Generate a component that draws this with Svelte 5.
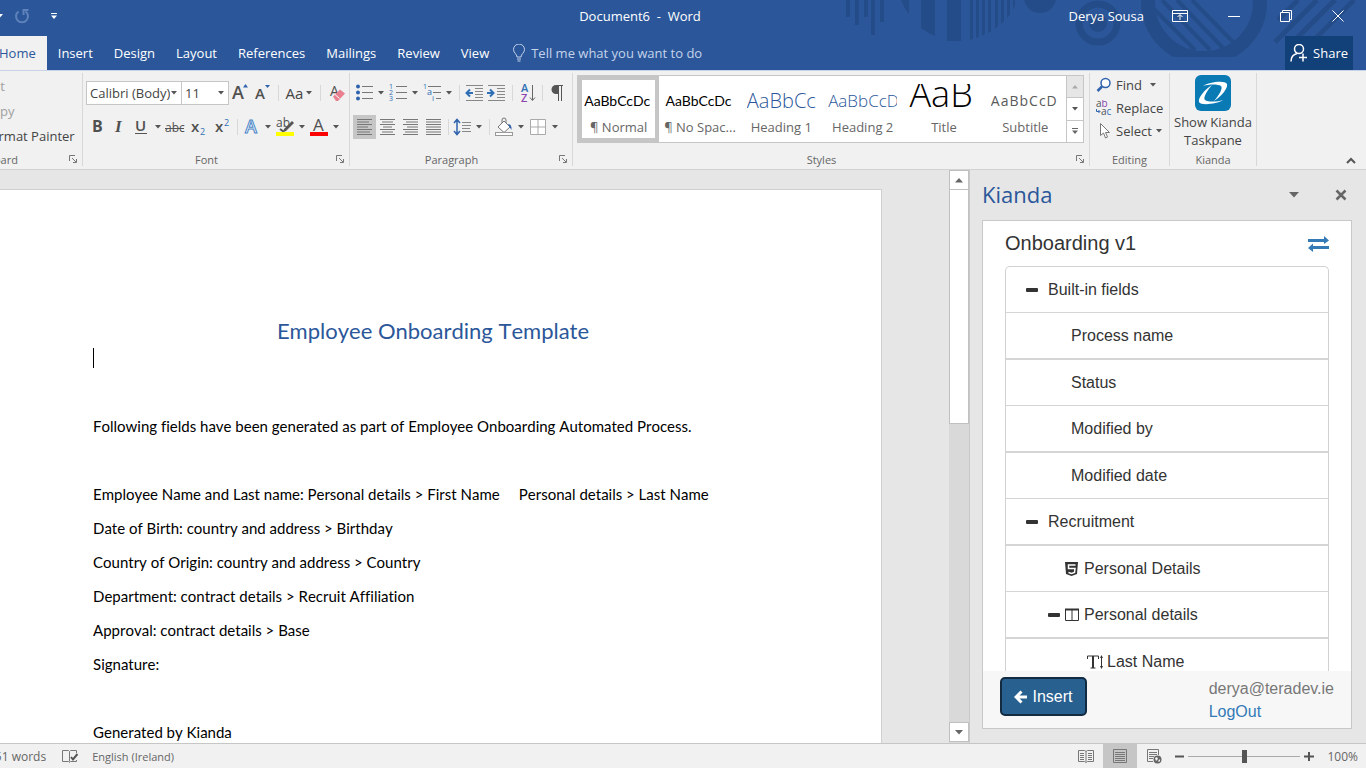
<script lang="ts">
  type Tool = { kind: string; label?: string; cls?: string; on?: boolean };

  const tabs = ['Insert', 'Design', 'Layout', 'References', 'Mailings', 'Review', 'View'];

  const sep = (cls = '') => ({ kind: 'sep', cls });
  const caret = (label: string) => ({ kind: 'caret', label: label + ' options', cls: 'narrow' });

  const fontTop: Tool[] = [
    { kind: 'grow', label: 'Increase font size' },
    { kind: 'shrink', label: 'Decrease font size' },
    sep('s10'),
    { kind: 'case', label: 'Change case', cls: 'wide' },
    sep('s10'),
    { kind: 'clear', label: 'Clear formatting', cls: 'mid' },
  ];
  const fontBottom: Tool[] = [
    { kind: 'bold', label: 'Bold' },
    { kind: 'italic', label: 'Italic' },
    { kind: 'underline', label: 'Underline' },
    caret('Underline'),
    { kind: 'strike', label: 'Strikethrough' },
    { kind: 'sub', label: 'Subscript', cls: 'mid' },
    { kind: 'sup', label: 'Superscript', cls: 'mid' },
    sep(),
    { kind: 'effects', label: 'Text effects' },
    caret('Text effects'),
    { kind: 'highlight', label: 'Highlight' },
    caret('Highlight'),
    { kind: 'color', label: 'Font color' },
    caret('Font color'),
  ];
  const paraTop: Tool[] = [
    { kind: 'bullets', label: 'Bullets' },
    caret('Bullets'),
    { kind: 'numbers', label: 'Numbering' },
    caret('Numbering'),
    { kind: 'multi', label: 'Multilevel list' },
    caret('Multilevel list'),
    sep('s8'),
    { kind: 'outdent', label: 'Decrease indent' },
    { kind: 'indent', label: 'Increase indent' },
    sep('s10'),
    { kind: 'sort', label: 'Sort' },
    sep(),
    { kind: 'pilcrow', label: 'Show marks', cls: 'mid' },
  ];
  const paraBottom: Tool[] = [
    { kind: 'left', label: 'Align left', cls: 'align', on: true },
    { kind: 'center', label: 'Center', cls: 'align' },
    { kind: 'right', label: 'Align right', cls: 'align' },
    { kind: 'justify', label: 'Justify', cls: 'align' },
    sep(),
    { kind: 'spacing', label: 'Line spacing' },
    caret('Line spacing'),
    sep('s8'),
    { kind: 'bucket', label: 'Shading' },
    caret('Shading'),
    { kind: 'borders', label: 'Borders' },
    caret('Borders'),
  ];

  const alignLines: Record<string, [number, number][]> = {
    left: [[3, 18], [3, 15], [3, 18], [3, 14], [3, 18], [3, 16], [3, 18]],
    center: [[3, 18], [5, 16], [3, 18], [6, 15], [3, 18], [5, 16], [3, 18]],
    right: [[3, 18], [6, 18], [3, 18], [7, 18], [3, 18], [5, 18], [3, 18]],
    justify: [[3, 18], [3, 18], [3, 18], [3, 18], [3, 18], [3, 18], [3, 18]],
  };

  const styles = [
    { sample: 'AaBbCcDc', name: '¶ Normal', cls: 'body' },
    { sample: 'AaBbCcDc', name: '¶ No Spac...', cls: 'body' },
    { sample: 'AaBbCc', name: 'Heading 1', cls: 'h1' },
    { sample: 'AaBbCcD', name: 'Heading 2', cls: 'h2' },
    { sample: 'AaB', name: 'Title', cls: 'title' },
    { sample: 'AaBbCcD', name: 'Subtitle', cls: 'subtitle' },
  ];

  const paragraphs = [
    'Following fields have been generated as part of Employee Onboarding Automated Process.',
    '',
    'Employee Name and Last name: Personal details > First Name\u00a0\u00a0\u00a0\u00a0 Personal details > Last Name',
    'Date of Birth: country and address > Birthday',
    'Country of Origin: country and address > Country',
    'Department: contract details > Recruit Affiliation',
    'Approval: contract details > Base',
    'Signature:',
    '',
    'Generated by Kianda',
  ];

  const fields = [
    { text: 'Built-in fields', level: 'top', minus: true },
    { text: 'Process name', level: 'child' },
    { text: 'Status', level: 'child' },
    { text: 'Modified by', level: 'child' },
    { text: 'Modified date', level: 'child' },
    { text: 'Recruitment', level: 'top', minus: true },
    { text: 'Personal Details', level: 'form', icon: 'html5' },
    { text: 'Personal details', level: 'panel', icon: 'columns', minus: true },
    { text: 'Last Name', level: 'field', icon: 'text' },
  ];

  let selectedStyle = $state(0);
  let zoom = $state(100);
</script>

{#snippet down()}
  <svg width="6" height="4" viewBox="0 0 6 4" aria-hidden="true"><path d="M0 0h6L3 3.5z" fill="#555" /></svg>
{/snippet}

{#snippet glyph(kind: string)}
  <svg width="22" height="24" viewBox="0 0 22 24" aria-hidden="true">
    {#if kind === 'grow'}
      <text x="3" y="18" font-size="18" class="g semi">A</text><path d="M14 6.500h5L16.500 3z" fill="#2f62ad" />
    {:else if kind === 'shrink'}
      <text x="4" y="18" font-size="15" class="g semi">A</text><path d="M14 4h5L16.500 7z" fill="#2f62ad" />
    {:else if kind === 'clear'}
      <text x="4" y="15" font-size="14" class="g">A</text>
      <path d="M7 15.500l7-7 5 4-7 7.500h-2z" fill="#e8808f" /><path d="M9 13.500l4.500 4" stroke="#fff" />
    {:else if kind === 'bold'}
      <text x="6" y="17" font-size="16" class="g heavy">B</text>
    {:else if kind === 'italic'}
      <text x="7" y="17" font-size="17" class="g serif">I</text>
    {:else if kind === 'underline'}
      <text x="5" y="16" font-size="15" class="g semi">U</text><path d="M5 18.500h12" stroke="#555" />
    {:else if kind === 'strike'}
      <text x="1" y="17" font-size="12" class="g">abc</text><path d="M1 13.500h19" stroke="#555" />
    {:else if kind === 'sub'}
      <text x="4" y="17" font-size="15" class="g semi">x</text><text x="13" y="20" font-size="9" class="b">2</text>
    {:else if kind === 'sup'}
      <text x="4" y="17" font-size="15" class="g semi">x</text><text x="13" y="11" font-size="9" class="b">2</text>
    {:else if kind === 'effects'}
      <text x="5" y="18" font-size="18" class="outline">A</text>
    {:else if kind === 'highlight'}
      <text x="2" y="12" font-size="12" class="g">ab</text>
      <path d="M18 6l2 2-8 8-3 1 1-3z" fill="#555" /><path d="M6 14l4 3" stroke="#555" stroke-width="2" />
      <rect x="2" y="17" width="18" height="4" fill="#ff0" />
    {:else if kind === 'color'}
      <text x="5" y="16" font-size="17" class="g">A</text><rect x="2" y="17" width="18" height="4" fill="#f00" />
    {:else if kind === 'bullets'}
      {#each [5, 11, 17] as y}
        <circle cx="5" cy={y + 0.5} r="2" fill="#2f62ad" /><path d="M9 {y + 0.5}h11" stroke="#777" />
      {/each}
    {:else if kind === 'numbers'}
      {#each [5, 11, 17] as y, i}
        <text x="2" y={y + 3} font-size="7" class="b">{i + 1}</text><path d="M9 {y + 0.5}h11" stroke="#777" />
      {/each}
    {:else if kind === 'multi'}
      <text x="2" y="8" font-size="7" class="b">1</text><text x="6" y="14" font-size="9" class="b">a</text><text x="11" y="20" font-size="8" class="b">i</text>
      <path d="M7 5.500h13M12 11.500h8M15 17.500h5" stroke="#777" />
    {:else if kind === 'outdent' || kind === 'indent'}
      <path d="M3 4.500h17M12 7.500h8M12 10.500h8M12 13.500h8M12 16.500h8M3 19.500h17" stroke="#888" />
      {#if kind === 'outdent'}
        <path d="M10 12H4M7 8.500L3.500 12 7 15.500" stroke="#2f6fb5" stroke-width="2" fill="none" />
      {:else}
        <path d="M2 12h6M5 8.500L8.500 12 5 15.500" stroke="#2f6fb5" stroke-width="2" fill="none" />
      {/if}
    {:else if kind === 'sort'}
      <text x="4" y="11" font-size="11" class="b semi">A</text><text x="4" y="21" font-size="11" class="p semi">Z</text>
      <path d="M15.500 4v15M13 16.500l2.500 3 2.500-3" stroke="#666" fill="none" />
    {:else if kind === 'pilcrow'}
      <path d="M17 4.500H10M12.500 4v16M15.500 4v16" stroke="#555" fill="none" /><path d="M12 4h-2a4.500 4.500 0 0 0 0 9h2z" fill="#555" />
    {:else if kind in alignLines}
      {#each alignLines[kind] as [a, b], i}
        <path d="M{a} {4.5 + i * 2.5}H{b}" stroke="#777" />
      {/each}
    {:else if kind === 'spacing'}
      <path d="M6 5v14M3 8l3-3.500L9 8M3 16l3 3.500L9 16" stroke="#2f62ad" stroke-width="1.500" fill="none" />
      <path d="M11 7.500h9M11 10.500h9M11 13.500h8M11 16.500h9" stroke="#888" />
    {:else if kind === 'bucket'}
      <path d="M5 12l6-6 6 6-6 5.500z" fill="#fff" stroke="#777" /><path d="M9 8V5a2 2 0 0 1 4 0v3" stroke="#777" fill="none" />
      <path d="M15 9q4 0 3.500 6l-2-3z" fill="#2f62ad" /><rect x="2.500" y="17.500" width="17" height="3" fill="#fff" stroke="#999" />
    {:else if kind === 'borders'}
      <path d="M3.500 4.500h15v15h-15z" fill="#fff" stroke="#aaa" /><path d="M11 5v14M4 12h14" stroke="#aaa" />
    {/if}
  </svg>
{/snippet}

{#snippet toolRow(items: Tool[])}
  {#each items as item}
    {#if item.kind === 'sep'}
      <span class="sep {item.cls}"></span>
    {:else}
      <button class="tool {item.cls ?? ''}" class:on={item.on} aria-label={item.label}>
        {#if item.kind === 'caret'}
          {@render down()}
        {:else if item.kind === 'case'}
          <span class="case">Aa</span>{@render down()}
        {:else}
          {@render glyph(item.kind)}
        {/if}
      </button>
    {/if}
  {/each}
{/snippet}

{#snippet launcher(label: string)}
  <button class="launcher" aria-label={label}>
    <svg width="9" height="9" viewBox="0 0 9 9" aria-hidden="true">
      <path d="M.5 6V.5H6M3 3l4 4M4 7.500h3.500V4" stroke="#777" fill="none" />
    </svg>
  </button>
{/snippet}

<div class="app">
  <header>
    <svg class="decor" width="526" height="57" viewBox="0 0 526 57" aria-hidden="true">
      <g fill="#244c88">
        <path d="M6 0h4v17H6zM15 0h4v25h-4zM24 0h4v17h-4zM31 0h4v35h-4zM40 0h4v22h-4z" />
        <path d="M61 0h8v14Q64 8 61 0zM81 0h14v36q-8-3-14-8zM107 0h14v41h-14z" />
        <path d="M130 0h3v39l-3 1zM136 0h3v37l-3 1zM142 0h3v34l-3 2zM148 0h3v31l-3 2zM155 0h3v26l-3 3zM161 0h3v21l-3 3zM167 0h3v15l-3 3zM173 0h2v6l-2 4z" />
        <path d="M184 0h32q-4 13-16 13T184 0z" />
        <circle cx="258" cy="23" r="9" />
      </g>
      <g fill="none" stroke="#244c88">
        <circle cx="258" cy="23" r="19" stroke-width="7" />
        <circle cx="364" cy="2" r="56" stroke-width="14" />
        <path d="M311 6l44 44M322 0l48 50M337 0l46 48M352 0l43 44" stroke-width="4" />
        <path d="M458 0l-20 20M477 0l-42 42M495 0l-42 42M514 0l-42 42" stroke-width="5" />
      </g>
    </svg>
    <div class="titlebar">
      <div class="quick">
        <button class="bare" aria-label="Undo options"><svg width="6" height="4" viewBox="0 0 6 4"><path d="M0 0h6L3 3.500z" fill="#fff" /></svg></button>
        <button class="bare" aria-label="Repeat">
          <svg width="16" height="16" viewBox="0 0 16 16"><path d="M4.500 3.500a6 6 0 1 0 7 0M14.500 2H9.500v5" stroke="#5f82bb" stroke-width="2" fill="none" /></svg>
        </button>
        <button class="bare customize" aria-label="Customize toolbar"><svg width="6" height="6" viewBox="0 0 6 6"><path d="M0 .5h6" stroke="#fff" /><path d="M0 2.500h6L3 6z" fill="#fff" /></svg></button>
      </div>
      <h1>Document6&nbsp; -&nbsp; Word</h1>
      <div class="window">
        <span class="user">Derya Sousa</span>
        <button class="bare" aria-label="Ribbon display"><svg width="16" height="12" viewBox="0 0 16 12"><path d="M.5.500h15v11H.5zM1 3.500h14M8 10V5M5.500 7L8 4.500 10.500 7" /></svg></button>
        <button class="bare" aria-label="Minimize"><svg width="12" height="12" viewBox="0 0 12 12"><path d="M0 6.500h12" /></svg></button>
        <button class="bare" aria-label="Restore"><svg width="12" height="12" viewBox="0 0 12 12"><path d="M.5 2.500h9v9h-9zM2.500 2V.5h9v9H10" /></svg></button>
        <button class="bare" aria-label="Close"><svg width="12" height="12" viewBox="0 0 12 12"><path d="M.5.500l11 11M11.500.500l-11 11" /></svg></button>
      </div>
    </div>
    <nav aria-label="Ribbon tabs">
      <button class="tab active">Home</button>
      {#each tabs as tab}
        <button class="tab">{tab}</button>
      {/each}
      <button class="tell">
        <svg width="12" height="18" viewBox="0 0 12 18" aria-hidden="true"><path d="M4 13c0-3-3.500-4-3.500-7.500a5.500 5.500 0 0 1 11 0C11.500 9 8 10 8 13zM4 15h4M4.500 17h3" stroke="#c5d3ea" fill="none" /></svg>
        Tell me what you want to do
      </button>
      <button class="share">
        <svg width="18" height="18" viewBox="0 0 18 18" aria-hidden="true"><circle cx="9" cy="5" r="4.500" /><path d="M1 17.500c0-4 2.500-7 6-8M13 9.500v8M9 13.500h8" /></svg>
        Share
      </button>
    </nav>
  </header>

  <section class="ribbon" aria-label="Home">
    <div class="group clipboard">
      <div class="content">
        <button class="dim">Cut</button>
        <button class="dim">Copy</button>
        <button>Format Painter</button>
      </div>
      <div class="caption"><span>Clipboard</span>{@render launcher('Clipboard settings')}</div>
    </div>

    <div class="group font">
      <div class="content">
        <div class="row">
          <label class="combo name"><select aria-label="Font"><option>Calibri (Body)</option></select>{@render down()}</label>
          <label class="combo size"><select aria-label="Font size"><option>11</option></select>{@render down()}</label>
          {@render toolRow(fontTop)}
        </div>
        <div class="row">{@render toolRow(fontBottom)}</div>
      </div>
      <div class="caption"><span>Font</span>{@render launcher('Font settings')}</div>
    </div>

    <div class="group paragraph">
      <div class="content">
        <div class="row">{@render toolRow(paraTop)}</div>
        <div class="row">{@render toolRow(paraBottom)}</div>
      </div>
      <div class="caption"><span>Paragraph</span>{@render launcher('Paragraph settings')}</div>
    </div>

    <div class="group styles">
      <div class="gallery">
        {#each styles as style, i}
          <button class="style" class:selected={i === selectedStyle} onclick={() => (selectedStyle = i)}>
            <span class="sample {style.cls}">{style.sample}</span>
            <span class="style-name">{style.name}</span>
          </button>
        {/each}
        <div class="scroller">
          <button disabled aria-label="Previous styles"><svg width="6" height="4" viewBox="0 0 6 4"><path d="M0 3.500h6L3 0z" fill="#aaa" /></svg></button>
          <button aria-label="Next styles">{@render down()}</button>
          <button aria-label="More styles"><svg width="6" height="6" viewBox="0 0 6 6"><path d="M0 .5h6" stroke="#666" /><path d="M0 2.500h6L3 6z" fill="#666" /></svg></button>
        </div>
      </div>
      <div class="caption"><span>Styles</span>{@render launcher('Style settings')}</div>
    </div>

    <div class="group editing">
      <div class="content">
        <button>
          <svg width="16" height="16" viewBox="0 0 16 16" aria-hidden="true"><circle cx="9.500" cy="6" r="4.500" stroke="#2f62ad" stroke-width="1.500" fill="#fff" /><path d="M6 9.500L1.500 14" stroke="#2f62ad" stroke-width="2.500" /></svg>
          Find <span class="gap"></span>{@render down()}
        </button>
        <button>
          <svg width="16" height="16" viewBox="0 0 16 16" aria-hidden="true"><text x="0" y="7" font-size="10" class="g">a<tspan class="p">b</tspan></text><text x="5" y="15" font-size="10" class="g">a<tspan class="b">c</tspan></text><path d="M.5 9v2.500h3M2.500 10L4 11.500 2.500 13" stroke="#2f62ad" fill="none" /></svg>
          Replace
        </button>
        <button>
          <svg width="16" height="16" viewBox="0 0 16 16" aria-hidden="true"><path d="M4.500.500v12l3-2.500 2 5 2-1-2-4.500h4z" stroke="#777" fill="#fff" /></svg>
          Select {@render down()}
        </button>
      </div>
      <div class="caption"><span>Editing</span></div>
    </div>

    <div class="group kianda">
      <button>
        <svg width="36" height="36" viewBox="0 0 36 36" aria-hidden="true">
          <rect width="36" height="36" rx="6" fill="#0a7ab5" />
          <path d="M8 11C14 7 30 5 32 9C33 13 27 21 19 26C25 19 28 13 26 11C23 9 14 9 8 11z" fill="#fff" />
          <path d="M28 25C22 29 6 31 4 27C3 23 9 15 17 10C11 17 8 23 10 25C13 27 22 27 28 25z" fill="#fff" />
        </svg>
        Show Kianda<br />Taskpane
      </button>
      <div class="caption"><span>Kianda</span></div>
    </div>
    <button class="collapse" aria-label="Collapse ribbon"><svg width="10" height="7" viewBox="0 0 10 7"><path d="M1 6l4-4 4 4" stroke="#555" stroke-width="2" fill="none" /></svg></button>
  </section>

  <main>
    <div class="canvas">
      <article>
        <h2>Employee Onboarding Template</h2>
        <div class="cursor"></div>
        {#each paragraphs as text}
          <p>{text}</p>
        {/each}
      </article>
    </div>
    <div class="scrollbar">
      <button aria-label="Scroll up"><svg width="8" height="5" viewBox="0 0 8 5"><path d="M0 4.500h8L4 0z" fill="#666" /></svg></button>
      <div class="track"><div class="thumb"></div></div>
      <button aria-label="Scroll down"><svg width="8" height="5" viewBox="0 0 8 5"><path d="M0 0h8L4 4.500z" fill="#666" /></svg></button>
    </div>
    <aside>
      <div class="pane-title">
        <h2>Kianda</h2>
        <button class="bare" aria-label="Pane options"><svg width="10" height="6" viewBox="0 0 10 6"><path d="M0 0h10L5 5.500z" fill="#666" /></svg></button>
        <button class="bare" aria-label="Close pane"><svg width="12" height="12" viewBox="0 0 12 12"><path d="M1.500 1.500l9 9M10.500 1.500l-9 9" stroke="#666" stroke-width="2.500" /></svg></button>
      </div>
      <div class="card">
        <div class="card-head">
          <h3>Onboarding v1</h3>
          <button class="bare" aria-label="Switch process">
            <svg width="21" height="16" viewBox="0 0 21 16"><path d="M0 3h16V0l5 4.500L16 8V6H0zM21 10H5V7.500L0 12l5 4v-3h16z" fill="#337ab7" /></svg>
          </button>
        </div>
        <ul>
          {#each fields as field}
            <li class={field.level}>
              {#if field.minus}
                <svg width="12" height="4" viewBox="0 0 12 4" aria-hidden="true"><rect width="12" height="4" rx="1" fill="#333" /></svg>
              {/if}
              {#if field.icon === 'html5'}
                <svg width="16" height="16" viewBox="0 0 16 16" aria-hidden="true"><path d="M1 1h13l-1 12-5.500 2L2 13z" fill="#333" /><path d="M11.500 4H4.500v3.500h6.500l-.5 4-3 1-3-1" stroke="#fff" stroke-width="1.500" fill="none" /></svg>
              {:else if field.icon === 'columns'}
                <svg width="16" height="16" viewBox="0 0 16 16" aria-hidden="true"><path d="M1.500 2.500h13v11h-13zM8 3v10" stroke="#333" fill="none" /><path d="M1 2.500h14" stroke="#333" stroke-width="2" /></svg>
              {:else if field.icon === 'text'}
                <svg width="16" height="16" viewBox="0 0 16 16" aria-hidden="true"><path d="M.5 5V2h11v3M3.500 14h5" stroke="#333" fill="none" /><path d="M6 2v12" stroke="#333" stroke-width="2" /><path d="M14.500 2v12" stroke="#333" /><path d="M13 4l1.500-3L16 4zM13 12l1.500 3 1.500-3z" fill="#333" /></svg>
              {/if}
              {field.text}
            </li>
          {/each}
        </ul>
        <footer>
          <button class="insert">
            <svg width="13" height="14" viewBox="0 0 13 14" aria-hidden="true"><path d="M7.500 1.500L2 7l5.500 5.500M2 7h11" stroke="#fff" stroke-width="3" fill="none" /></svg>
            Insert
          </button>
          <div class="account">
            <span>derya@teradev.ie</span>
            <a href="#logout">LogOut</a>
          </div>
        </footer>
      </div>
    </aside>
  </main>

  <div class="status">
    <span class="words">151 words</span>
    <svg width="16" height="15" viewBox="0 0 16 15" aria-hidden="true"><path d="M14.500 4V1.500H8.500L7.500 2.500 6.500 1.500H.5v11h6l1 1 1-1h6V11M7.500 2.500v10" stroke="#777" fill="none" /><path d="M9 8l2 2.500L15.500 5" stroke="#555" stroke-width="2" fill="none" /></svg>
    <span class="lang">English (Ireland)</span>
    <div class="views">
      <button aria-label="Read mode"><svg width="16" height="14" viewBox="0 0 16 14"><path d="M.5 1.500h6L8 2.500l1.500-1h6v11h-6l-1.500 1-1.500-1h-6zM8 2.500v10M2 4.500h4M2 6.500h4M2 8.500h4M2 10.500h4M10 4.500h4M10 6.500h4M10 8.500h4M10 10.500h4" stroke="#777" fill="none" /></svg></button>
      <button class="on" aria-label="Print layout"><svg width="16" height="14" viewBox="0 0 16 14"><path d="M1.500.500h13v13h-13zM3 3.500h10M3 5.500h10M3 7.500h10M3 9.500h10M3 11.500h10" stroke="#777" fill="none" /></svg></button>
      <button aria-label="Web layout"><svg width="16" height="15" viewBox="0 0 16 15"><path d="M7 12.500H1.500V.500h11V6M3 3.500h8M3 5.500h8M3 7.500h5M3 9.500h4" stroke="#777" fill="none" /><circle cx="11.500" cy="10.500" r="4" fill="#666" /><path d="M9 9l2-1 1 2-2 2zM12 12l2-2v2l-1 1z" fill="#f1f1f1" /></svg></button>
    </div>
    <button class="bare" aria-label="Zoom out"><svg width="9" height="9" viewBox="0 0 9 9"><path d="M0 4.500h9" stroke="#555" stroke-width="2" /></svg></button>
    <input type="range" min="10" max="190" bind:value={zoom} aria-label="Zoom" />
    <button class="bare" aria-label="Zoom in"><svg width="10" height="9" viewBox="0 0 10 9"><path d="M0 4.500h10M5 0v9" stroke="#555" stroke-width="2" /></svg></button>
    <span class="percent">{zoom}%</span>
  </div>
</div>

<style>
  :global(body) {
    margin: 0;
    overflow: hidden;
  }

  .app {
    --blue: #2b579a;
    --ui: 'Open Sans', 'Noto Sans', sans-serif;
    display: flex;
    flex-direction: column;
    height: 100vh;
    overflow: hidden;
    font-family: var(--ui);
    font-size: 13px;
    color: #444;
    background: #e6e6e6;
  }

  h1,
  h2,
  h3,
  p,
  ul {
    margin: 0;
    padding: 0;
    font-weight: 400;
  }

  button {
    padding: 0;
    border: 0;
    background: none;
    color: inherit;
    font: inherit;
    white-space: nowrap;
  }

  svg {
    display: block;
    flex: none;
  }

  header {
    position: relative;
    flex: none;
    background: var(--blue);
    color: #fff;
  }

  .decor {
    position: absolute;
    top: 0;
    right: 0;
  }

  .titlebar {
    position: relative;
    display: grid;
    grid-template-columns: 1fr auto 1fr;
    align-items: center;
    height: 32px;
    padding-bottom: 4px;
  }

  .titlebar h1 {
    font-size: 13px;
    margin-right: 86px;
  }

  .quick,
  .window {
    display: flex;
    align-items: center;
  }

  .quick {
    gap: 11px;
    margin-left: -3px;
  }

  .quick .customize {
    margin-left: 10px;
  }

  .window {
    justify-content: flex-end;
    gap: 40px;
    padding-right: 22px;
  }

  .window .user {
    margin-right: -12px;
  }

  .window path {
    stroke: #fff;
    fill: none;
  }

  nav {
    position: relative;
    display: flex;
    height: 34px;
  }

  .tab {
    padding: 0 10px 0 11px;
  }

  .tab.active {
    padding: 0 11px 0 0;
    margin-left: -1px;
    background: #f1f1f1;
    color: var(--blue);
  }

  .tell {
    display: flex;
    align-items: center;
    gap: 6px;
    margin-left: 14px;
    color: #c5d3ea;
  }

  .share {
    display: flex;
    align-items: center;
    gap: 5px;
    margin: 0 13px 0 auto;
    padding: 0 5px;
    background: #124078;
  }

  .share svg {
    stroke: #fff;
    stroke-width: 1.5;
    fill: none;
  }

  .ribbon {
    display: flex;
    flex: none;
    height: 98px;
    border-top: 1px solid #c8d2e6;
    border-bottom: 1px solid #d2d2d2;
    background: #f1f1f1;
  }

  .group {
    display: flex;
    flex-direction: column;
    flex: none;
    margin: 2px 0 3px;
    border-right: 1px solid #d8d8d8;
  }

  .content {
    display: flex;
    flex-direction: column;
    flex: 1;
    gap: 10px;
    padding: 8px 0 0 3px;
  }

  .caption {
    display: flex;
    align-items: center;
    height: 14px;
    margin-top: auto;
    font-size: 11px;
    color: #666;
  }

  .caption span {
    flex: 1;
    text-align: center;
  }

  .launcher {
    margin: 0 4px 0 6px;
  }

  .clipboard {
    width: 114px;
    margin-left: -32px;
  }

  .clipboard .content {
    align-items: flex-start;
    gap: 0;
    padding: 0 0 0 16px;
  }

  .clipboard .content button {
    height: 25px;
  }

  .clipboard .caption span {
    text-align: left;
  }

  .clipboard .dim {
    color: #a0a0a0;
  }

  .font {
    width: 266px;
  }

  .paragraph {
    width: 222px;
  }

  .row {
    display: flex;
    align-items: center;
    height: 24px;
  }

  .tool {
    display: flex;
    align-items: center;
    justify-content: center;
    width: 22px;
    height: 24px;
    flex: none;
  }

  .tool.narrow {
    width: 12px;
  }

  .tool.align {
    width: 23px;
  }

  .tool.mid {
    width: 24px;
  }

  .tool.wide {
    width: 32px;
    gap: 3px;
  }

  .tool.on {
    background: #c6c6c6;
  }

  .case {
    font-size: 15px;
  }

  .sep {
    width: 6px;
    height: 16px;
    flex: none;
    background: linear-gradient(#d8d8d8, #d8d8d8) center / 1px 100% no-repeat;
  }

  .sep.s8 {
    width: 8px;
  }

  .sep.s10 {
    width: 10px;
  }

  .g {
    fill: #505050;
  }

  .b {
    fill: #2f6fb5;
  }

  .p {
    fill: #8a45b0;
  }

  .semi {
    font-weight: 600;
  }

  .heavy {
    font-weight: 700;
  }

  .serif {
    font-family: 'Liberation Serif', serif;
    font-style: italic;
    font-weight: 700;
  }

  .outline {
    fill: #fff;
    stroke: #4a86c8;
    font-weight: 600;
  }

  .combo {
    position: relative;
    flex: none;
    box-sizing: border-box;
    height: 24px;
    border: 1px solid #c6c6c6;
    background: #fff;
  }

  .combo.name {
    width: 96px;
  }

  .combo.size {
    width: 48px;
    margin-left: -1px;
  }

  .combo select {
    width: 100%;
    height: 100%;
    padding: 0 11px 0 3px;
    border: 0;
    appearance: none;
    background: none;
    color: #444;
    font: inherit;
  }

  .combo svg {
    position: absolute;
    top: 9px;
    right: 4px;
  }

  .styles {
    flex: 0 1 516px;
  }

  .gallery {
    display: grid;
    grid-template-columns: repeat(6, minmax(0, 1fr)) 17px;
    height: 66px;
    margin: 2px 5px 0 4px;
    border: 1px solid #c6c6c6;
    background: #fff;
  }

  .style {
    display: flex;
    flex-direction: column;
    align-items: center;
    box-sizing: border-box;
    padding: 4px 0;
  }

  .style.selected {
    border: 4px solid #c6c6c6;
    padding: 0;
  }

  .sample {
    display: flex;
    align-items: center;
    width: 69px;
    height: 32px;
    margin-top: 4px;
    overflow: hidden;
    color: #000;
    font-family: Lato, sans-serif;
  }

  .sample.body {
    font-size: 14px;
  }

  .sample.h1,
  .sample.h2,
  .sample.title,
  .sample.subtitle {
    font-family: var(--ui);
    font-weight: 300;
  }

  .sample.h1 {
    color: var(--blue);
    font-size: 20px;
  }

  .sample.h2 {
    color: var(--blue);
    font-size: 17px;
  }

  .sample.title {
    align-items: flex-start;
    font-size: 36px;
    line-height: 20px;
  }

  .sample.subtitle {
    color: #5a5a5a;
    font-size: 14px;
    font-weight: 400;
    letter-spacing: 1px;
  }

  .style-name {
    font-size: 13px;
    line-height: 22px;
    color: #666;
  }

  .scroller {
    display: flex;
    flex-direction: column;
    border-left: 1px solid #c6c6c6;
  }

  .scroller button {
    display: flex;
    flex: 1;
    align-items: center;
    justify-content: center;
  }

  .scroller button + button {
    border-top: 1px solid #c6c6c6;
  }

  .scroller button:disabled {
    background: #e6e6e6;
  }

  .editing {
    width: 79px;
  }

  .editing .content {
    gap: 0;
    padding: 0 0 0 6px;
  }

  .editing .content button {
    display: flex;
    align-items: center;
    gap: 4px;
    height: 23px;
  }

  .kianda {
    width: 86px;
  }

  .kianda button {
    display: flex;
    flex-direction: column;
    align-items: center;
    padding-top: 2px;
    line-height: 18px;
    white-space: normal;
  }

  .kianda button svg {
    margin-bottom: 2px;
  }

  .collapse {
    align-self: flex-end;
    margin: 0 10px 5px auto;
  }

  main {
    display: flex;
    flex: 1;
    min-height: 0;
  }

  .canvas {
    flex: 1;
    min-width: 0;
    padding: 19px 67px 0 0;
    overflow: hidden;
  }

  article {
    height: 100%;
    box-sizing: border-box;
    padding: 125px 0 0 93px;
    border: solid #d0d0d0;
    border-width: 1px 1px 0 0;
    background: #fff;
    color: #000;
    font-family: Lato, sans-serif;
    font-size: 15px;
    font-kerning: none;
    font-variant-ligatures: none;
  }

  article h2 {
    margin-right: 108px;
    color: var(--blue);
    font-size: 22px;
    line-height: 32px;
    text-align: center;
  }

  .cursor {
    width: 1px;
    height: 20px;
    margin: 1px 0 41px;
    background: #000;
  }

  article p {
    height: 34px;
    line-height: 34px;
    white-space: nowrap;
  }

  .scrollbar {
    display: flex;
    flex-direction: column;
    width: 20px;
    box-sizing: border-box;
    padding-bottom: 1px;
    background: #d9d9d9;
  }

  .scrollbar button {
    display: flex;
    align-items: center;
    justify-content: center;
    height: 20px;
    box-sizing: border-box;
    border: 1px solid #c0c0c0;
    background: #fff;
  }

  .track {
    flex: 1;
  }

  .thumb {
    height: 44%;
    box-sizing: border-box;
    border: 1px solid #c0c0c0;
    border-top: 0;
    background: #fff;
  }

  aside {
    display: flex;
    flex-direction: column;
    width: 370px;
    padding: 0 14px 14px 12px;
    border-left: 1px solid #c8c8c8;
  }

  .pane-title {
    display: flex;
    align-items: center;
    flex: none;
    gap: 36px;
    height: 50px;
    padding-right: 5px;
  }

  .pane-title h2 {
    flex: 1;
    padding-bottom: 2px;
    color: var(--blue);
    font-size: 22px;
  }

  .card {
    display: flex;
    flex-direction: column;
    flex: 1;
    min-height: 0;
    border: 1px solid #c8c8c8;
    background: #fff;
    color: #333;
    font-family: 'Liberation Sans', Arial, sans-serif;
    font-size: 16px;
  }

  .card-head {
    display: flex;
    align-items: center;
    justify-content: space-between;
    flex: none;
    height: 45px;
    padding: 0 22px;
  }

  .card h3 {
    font-size: 20px;
  }

  ul {
    flex: 1;
    min-height: 0;
    margin: 0 22px;
    border: 1px solid #d2d2d2;
    border-bottom: 0;
    border-radius: 5px 5px 0 0;
    overflow: hidden;
    list-style: none;
  }

  li {
    display: flex;
    align-items: center;
    height: 45px;
    border-bottom: 1px solid #d5d5d5;
  }

  li:nth-child(even) {
    border-bottom-width: 2px;
  }

  li.top {
    padding-left: 20px;
    gap: 10px;
  }

  li.child {
    padding-left: 65px;
  }

  li.form {
    padding-left: 58px;
    gap: 4px;
  }

  li.panel {
    padding-left: 42px;
    gap: 4px;
  }

  li.field {
    padding-left: 81px;
    gap: 4px;
  }

  footer {
    display: flex;
    align-items: flex-start;
    justify-content: space-between;
    flex: none;
    height: 51px;
    padding: 6px 17px 0;
    background: #f7f7f7;
  }

  .insert {
    display: flex;
    align-items: center;
    justify-content: center;
    gap: 5px;
    width: 87px;
    height: 39px;
    box-sizing: border-box;
    border: 2px solid #122b40;
    border-radius: 5px;
    background: #286090;
    color: #fff;
  }

  .account {
    display: flex;
    flex-direction: column;
    color: #777;
    line-height: 23px;
  }

  .account a {
    color: #337ab7;
    text-decoration: none;
  }

  .status {
    display: flex;
    align-items: center;
    flex: none;
    height: 24px;
    padding-right: 8px;
    border-top: 1px solid #c6c6c6;
    background: #f1f1f1;
    color: #666;
    font-size: 12px;
  }

  .words {
    margin: 0 16px 0 -12px;
  }

  .lang {
    margin-left: 14px;
    font-size: 11px;
  }

  .views {
    display: flex;
    align-self: stretch;
    margin: 0 4px 0 auto;
  }

  .views button {
    display: flex;
    align-items: center;
    justify-content: center;
    width: 34px;
  }

  .views .on {
    background: #c6c6c6;
  }

  .status input {
    width: 112px;
    height: 14px;
    margin: 0 4px;
    appearance: none;
    background: linear-gradient(#aaa, #aaa) center / 100% 1px no-repeat;
  }

  .status input::-webkit-slider-thumb {
    appearance: none;
    width: 5px;
    height: 13px;
    background: #555;
  }

  .percent {
    margin-left: 13px;
  }
</style>
